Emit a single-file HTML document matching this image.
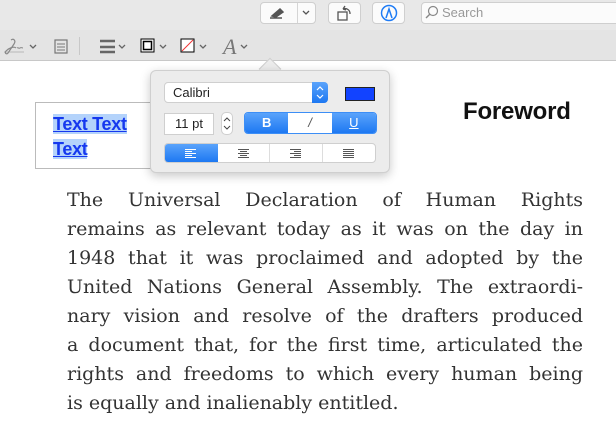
<!DOCTYPE html>
<html><head><meta charset="utf-8"><style>
*{margin:0;padding:0;box-sizing:border-box}
body{width:616px;height:443px;overflow:hidden;background:#fff;font-family:"Liberation Sans",sans-serif;position:relative}
.top{position:absolute;left:0;top:0;width:616px;height:30px;background:#e8e8e8}
.bar2{position:absolute;left:0;top:30px;width:616px;height:31px;background:#e4e4e4;border-bottom:1px solid #c8c8c8}
.btn{position:absolute;top:2px;height:22px;background:#fbfbfb;border:1px solid #cfcfcf;border-radius:4px}
.ico{position:absolute}
.pop{position:absolute;left:150px;top:70px;width:240px;height:103px;background:#ececec;border:1px solid #cfcfcf;border-radius:6px;box-shadow:0 3px 10px rgba(0,0,0,.22)}
.arrow{position:absolute;left:262px;top:61px;width:16px;height:16px;background:#ececec;transform:rotate(45deg);border-left:1px solid #cfcfcf;border-top:1px solid #cfcfcf}
.body{position:absolute;left:67px;top:186px;width:516px;font-family:"DejaVu Serif",serif;font-size:19px;line-height:29px;color:#333;font-weight:300}
.body div{text-align:justify;text-align-last:justify;white-space:nowrap;}
.body div.l{text-align-last:left}
</style></head><body>
<div class="top"></div>
<div class="btn" style="left:260px;width:56px"></div>
<div style="position:absolute;left:297px;top:3px;width:1px;height:20px;background:#d5d5d5"></div>
<svg class="ico" style="left:268px;top:6px" width="18" height="14"><path d="M2 12h12M4 10l8-7 3 3-7 5z" stroke="#555" stroke-width="1.5" fill="#555"/></svg>
<svg class="ico" style="left:301px;top:9px" width="10" height="8"><path d="M2 2l3 3 3-3" stroke="#555" fill="none" stroke-width="1.3"/></svg>
<div class="btn" style="left:328px;width:33px"></div>
<svg class="ico" style="left:335px;top:3px" width="20" height="20"><rect x="3" y="9" width="9" height="8" fill="none" stroke="#555" stroke-width="1.3"/><path d="M8 6a5 5 0 0 1 7 5M8 6l2-3M8 6l3 1" stroke="#555" fill="none" stroke-width="1.3"/></svg>
<div class="btn" style="left:372px;width:33px"></div>
<svg class="ico" style="left:380px;top:4px" width="18" height="18"><circle cx="9" cy="9" r="7.5" stroke="#1f7cf5" stroke-width="1.5" fill="none"/><path d="M6 14l3-9 3 9" stroke="#1f7cf5" stroke-width="1.5" fill="none"/></svg>
<div class="btn" style="left:421px;width:200px"></div>
<svg class="ico" style="left:425px;top:5px" width="14" height="14"><circle cx="8" cy="6" r="4.5" stroke="#888" stroke-width="1.2" fill="none"/><path d="M5 9l-4 4" stroke="#888" stroke-width="1.4"/></svg>
<div style="position:absolute;left:442px;top:5px;font-size:13px;color:#999">Search</div>

<div class="bar2"></div>
<svg class="ico" style="left:2px;top:37px" width="24" height="20"><path d="M2 15h20" stroke="#aaa" stroke-width="0.8"/><path d="M9 3c3-2 5 1 3 4-2 3-4 6-6 9-1 2-4 0-2-2 3-3 8-5 10-3" stroke="#888" fill="none" stroke-width="1.2"/><path d="M15 11c1-1 2 1 3 0s2 0 3 0" stroke="#888" fill="none"/></svg>
<svg class="ico" style="left:28px;top:43px" width="10" height="8"><path d="M2 2l3 3 3-3" stroke="#666" fill="none" stroke-width="1.3"/></svg>
<svg class="ico" style="left:54px;top:39px" width="14" height="15"><rect x="1" y="1" width="12" height="13" fill="none" stroke="#777" stroke-width="1.2"/><path d="M3 5h8M3 8h8M3 11h8" stroke="#777"/></svg>
<div style="position:absolute;left:79px;top:37px;width:1px;height:18px;background:#c8c8c8"></div>
<svg class="ico" style="left:99px;top:39px" width="18" height="16"><path d="M1 2h15M1 8h15M1 13h15" stroke="#666" stroke-width="2.4"/></svg>
<svg class="ico" style="left:117px;top:43px" width="10" height="8"><path d="M2 2l3 3 3-3" stroke="#666" fill="none" stroke-width="1.3"/></svg>
<svg class="ico" style="left:140px;top:38px" width="15" height="15"><rect x="1" y="1" width="13" height="13" fill="#fff" stroke="#000" stroke-width="1"/><rect x="3.5" y="3.5" width="8" height="8" fill="none" stroke="#000" stroke-width="1.5"/></svg>
<svg class="ico" style="left:158px;top:43px" width="10" height="8"><path d="M2 2l3 3 3-3" stroke="#666" fill="none" stroke-width="1.3"/></svg>
<svg class="ico" style="left:180px;top:38px" width="15" height="15"><rect x="1" y="1" width="13" height="13" fill="#fff" stroke="#000" stroke-width="1"/><path d="M2 13L13 2" stroke="#e33" stroke-width="1"/></svg>
<svg class="ico" style="left:198px;top:43px" width="10" height="8"><path d="M2 2l3 3 3-3" stroke="#666" fill="none" stroke-width="1.3"/></svg>
<div style="position:absolute;left:223px;top:34px;font-family:'Liberation Serif',serif;font-style:italic;font-size:22px;color:#777">A</div>
<svg class="ico" style="left:239px;top:43px" width="10" height="8"><path d="M2 2l3 3 3-3" stroke="#666" fill="none" stroke-width="1.3"/></svg>

<div style="position:absolute;left:35px;top:102px;width:140px;height:67px;border:1px solid #bbb"></div>
<div style="position:absolute;left:53px;top:112px;font-weight:bold;font-size:18px;line-height:25px;color:#1538ef;text-decoration:underline;letter-spacing:-0.3px"><span style="background:#b4d3fb">Text Text</span><br><span style="background:#b4d3fb">Text</span></div>
<div style="position:absolute;left:463px;top:98px;font-weight:bold;font-size:24px;color:#111;letter-spacing:-0.2px">Foreword</div>

<div class="arrow"></div>
<div class="pop">
<div style="position:absolute;left:13px;top:11px;width:164px;height:21px;background:#fff;border:1px solid #cfcfcf;border-radius:4px;font-size:13px;line-height:19px;padding-left:8px;color:#222">Calibri</div>
<div style="position:absolute;left:161px;top:11px;width:16px;height:21px;background:linear-gradient(#5aa3fb,#1d78f2);border-radius:0 4px 4px 0"><svg width="16" height="21"><path d="M5 8l3-3 3 3M5 13l3 3 3-3" stroke="#fff" fill="none" stroke-width="1.2"/></svg></div>
<div style="position:absolute;left:194px;top:16px;width:30px;height:14px;background:#1243ff;border:1px solid #222"></div>
<div style="position:absolute;left:13px;top:42px;width:50px;height:22px;background:#fff;border:1px solid #cfcfcf;font-size:13px;line-height:20px;text-align:center;color:#222">11 pt</div>
<div style="position:absolute;left:70px;top:41px;width:12px;height:23px;background:#fff;border:1px solid #cfcfcf;border-radius:5px"><svg width="10" height="21"><path d="M2 8l3-3 3 3M2 13l3 3 3-3" stroke="#444" fill="none" stroke-width="1"/></svg></div>
<div style="position:absolute;left:93px;top:41px;width:133px;height:22px;border-radius:4px;overflow:hidden;border:1px solid #3c8ef6;display:flex;font-size:13px;line-height:20px;text-align:center">
<div style="width:44px;background:linear-gradient(#5aa3fb,#1d78f2);color:#fff;font-weight:bold">B</div>
<div style="width:44px;background:#fff;color:#555;font-style:italic">/</div>
<div style="width:45px;background:linear-gradient(#5aa3fb,#1d78f2);color:#fff;text-decoration:underline">U</div></div>
<div style="position:absolute;left:13px;top:72px;width:212px;height:20px;border-radius:4px;overflow:hidden;border:1px solid #cfcfcf;background:#fff;display:flex">
<div style="width:53px;background:linear-gradient(#5aa3fb,#1d78f2);position:relative"><svg style="position:absolute;left:20px;top:5px" width="12" height="9"><path d="M0 .5h11M0 2.5h7M0 4.5h11M0 6.5h7M0 8.5h11" stroke="#fff"/></svg></div>
<div style="width:53px;border-right:1px solid #ddd;position:relative"><svg style="position:absolute;left:20px;top:5px" width="12" height="9"><path d="M0 .5h11M2 2.5h7M0 4.5h11M2 6.5h7M0 8.5h11" stroke="#555"/></svg></div>
<div style="width:53px;border-right:1px solid #ddd;position:relative"><svg style="position:absolute;left:20px;top:5px" width="12" height="9"><path d="M0 .5h11M4 2.5h7M0 4.5h11M4 6.5h7M0 8.5h11" stroke="#555"/></svg></div>
<div style="width:53px;position:relative"><svg style="position:absolute;left:20px;top:5px" width="12" height="9"><path d="M0 .5h11M0 2.5h11M0 4.5h11M0 6.5h11M0 8.5h11" stroke="#555"/></svg></div>
</div>
</div>

<div class="body">
<div>The Universal Declaration of Human Rights</div>
<div>remains as relevant today as it was on the day in</div>
<div>1948 that it was proclaimed and adopted by the</div>
<div>United Nations General Assembly. The extraordi-</div>
<div>nary vision and resolve of the drafters produced</div>
<div>a document that, for the first time, articulated the</div>
<div>rights and freedoms to which every human being</div>
<div class="l">is equally and inalienably entitled.</div>
</div>
</body></html>
